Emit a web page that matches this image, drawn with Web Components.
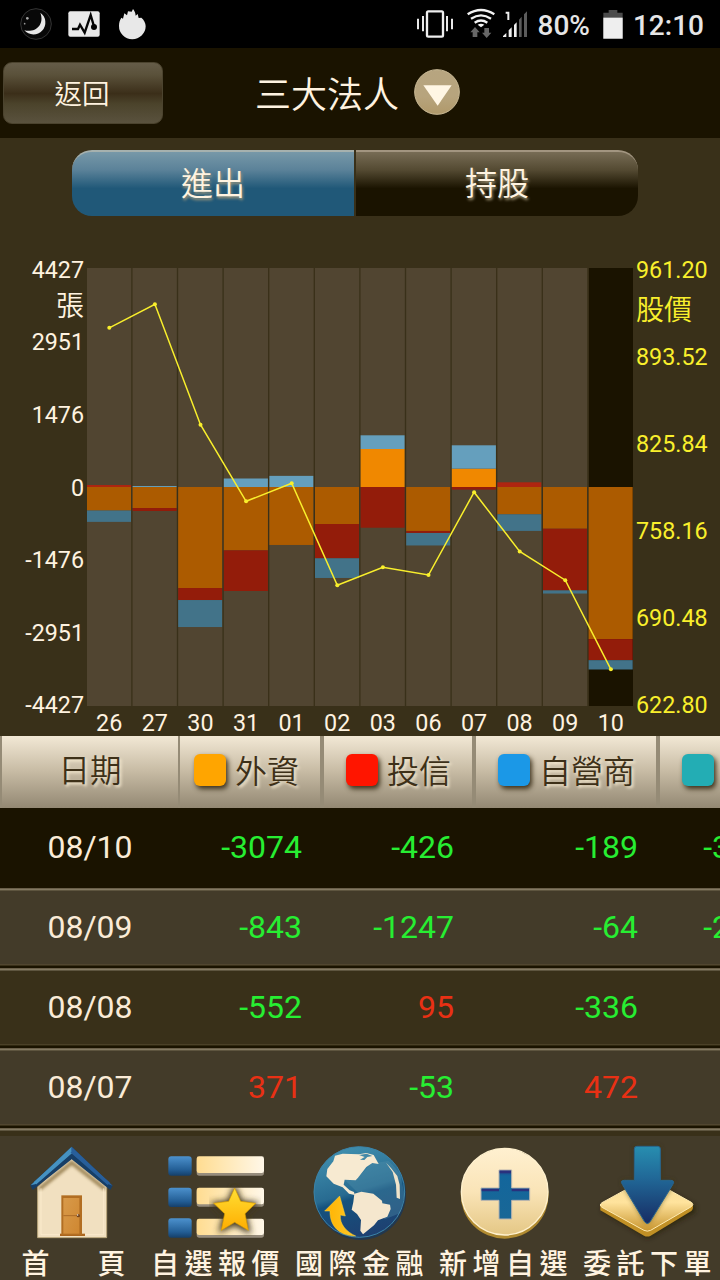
<!DOCTYPE html>
<html lang="zh-Hant">
<head>
<meta charset="utf-8">
<title>三大法人</title>
<style>
    body{
        margin:0;
        width:720px;
        height:1280px;
        overflow:hidden;
        background:#393019;
        color:#fff3e0;
        font-family:Roboto,"Noto Sans CJK TC",sans-serif;
    }
</style>
</head>
<body>
<stock-app></stock-app>
<script>
const makeTemplate = (html) => {
    const template = document.createElement('template')
    template.innerHTML = html
    return template
}

const statusTemplate = makeTemplate(`
<style>
    :host{
        display:flex;
        align-items:center;
        height:48px;
        background:#000;
        color:#e6e6e6;
        font-size:28px;
        font-weight:500;
        line-height:51px;
    }
    svg{ display:block; flex:none; }
    .right{
        margin-left:auto;
        display:flex;
        align-items:center;
        padding-right:16px;
    }
    .battery{ margin:0 10px 0 13px; }
    span{ height:48px; }
</style>
<svg width="150" height="48" viewBox="0 0 450 144">
    <circle cx="108" cy="72" r="46" fill="#080808" stroke="#343434" stroke-width="3"/>
    <path d="M121 38a36 36 0 1 1-48 53c31 8 62-15 48-53Z" fill="#e8e8e8"/>
    <circle cx="82" cy="55" r="4" fill="#aaa"/><circle cx="74" cy="71" r="2.5" fill="#999"/>
    <rect x="205" y="34" width="94" height="76" rx="6" fill="#e9e9e9"/>
    <path d="M216 87h18l6-13 14 24 18-53 10 34" fill="none" stroke="#050505" stroke-width="7"/>
    <circle cx="282" cy="81" r="9" fill="#050505"/>
    <path d="M357 78c0-12 3-18 7-25l5 3 4-16 8 6 3-12 11 1 4-8c4 6 7 9 8 20l6-5 3 12 8-1c8 7 13 16 13 26a40 39 0 0 1-80-1Z" fill="#e8e8e8"/>
</svg>
<div class="right">
    <svg width="122" height="48" viewBox="150 0 366 144">
        <rect x="198" y="34" width="48" height="76" rx="4" fill="none" stroke="#eee" stroke-width="7"/>
        <path d="M171 56v32M186 48v46M258 48v46M273 56v32" stroke="#e8e8e8" stroke-width="6"/>
        <g fill="none" stroke="#f2f2f2" stroke-width="7">
            <path d="M320 43q40-26 80 0"/><path d="M330 56q30-20 60 0"/><path d="M341 68q19-13 38 0"/>
        </g>
        <path d="M350 74q10-6 20 0l-10 8Z" fill="#f2f2f2"/>
        <path d="M342 81l14 16h-7v14h-14v-14h-7ZM377 114l14-16h-7V84h-14v14h-7Z" fill="#676767"/>
        <path d="M434 38h8v22" fill="none" stroke="#eee" stroke-width="6"/>
        <path d="M426 111v-3l10-9v12ZM443 111V91l9-9v29ZM459 111V75l8-8v44Z" fill="#f0f0f0"/>
        <path d="M474 111V59l8-9v61ZM489 111V43l9-9v77Z" fill="#5c5c5c"/>
    </svg>
    <span style="margin-left:5px">80%</span>
    <svg class="battery" width="20" height="48" viewBox="729 0 60 144">
        <path d="M730 116V38h16v-8h26v8h16v78Z" fill="#4b4b4b"/>
        <path d="M730 53h58v63h-58Z" fill="#eee"/>
    </svg>
    <span>12:10</span>
</div>
`)

const headerTemplate = makeTemplate(`
<style>
    :host{
        display:grid;
        grid-template-columns:163px 1fr;
        align-items:center;
        height:90px;
        background:#1a1300;
    }
    .back{
        box-sizing:border-box;
        width:160px;
        height:62px;
        margin-left:3px;
        border:1px solid #4b432e;
        border-radius:9px;
        background:linear-gradient(#655c48,#5a513a 20%,#3b2e19 51%,#4b432b 68%,#5a523e);
        font:350 27.5px/62px Roboto,"Noto Sans CJK TC",sans-serif;
        color:inherit;
        padding:1px 2px 0 0;
        text-align:center;
    }
    .title{
        display:flex;
        align-items:center;
        margin-left:92px;
        gap:15px;
        font-size:36px;
        font-weight:350;
        line-height:90px;
    }
    .title span{ padding-top:4px; height:90px; box-sizing:border-box; line-height:88px; }
    .title svg{ margin-top:-2px; }
</style>
<button class="back"><slot name="back"></slot></button>
<div class="title"><span><slot></slot></span>
    <svg width="46" height="46" viewBox="0 0 138 138">
        <defs><linearGradient id="g" x2="0" y2="1"><stop stop-color="#b7a580"/><stop offset=".6" stop-color="#b7a47d"/><stop offset="1" stop-color="#b0996a"/></linearGradient></defs>
        <circle cx="69" cy="69" r="67" fill="url(#g)" stroke="#c9b995" stroke-width="3"/>
        <path d="M28 49H113L71 110Z" fill="#fff6e4"/>
    </svg>
</div>
`)

const tabTemplate = makeTemplate(`
<style>
    :host{
        display:block;
        height:66px;
        box-sizing:border-box;
        border-top:2px solid #a29580;
        background:linear-gradient(#776c55,#544a32 28%,#1a1300 57%);
        border-radius:0 20px 20px 0;
        text-align:center;
        font-size:32px;
        font-weight:350;
        line-height:64px;
        text-shadow:1px 2px 3px #a89c7c;
    }
    :host([active]){
        border-color:#a6b1ae;
        background:linear-gradient(#7798a8,#5b8299 28%,#205878 57%);
        border-radius:20px 0 0 20px;
    }
</style>
<slot></slot>
`)

const rowTemplate = makeTemplate(`
<style>
    :host{
        display:grid;
        grid-template-columns:180px 140px 152px 184px 146px;
        box-sizing:border-box;
        width:802px;
        height:80px;
        line-height:78px;
        font-size:32px;
        text-align:right;
        background:linear-gradient(#6a5f49 1px,#837962 1px 2px,#5e553f 2px 3px,#433b29 3px 76px,#514630 76px 77px,#393019 77px 78px,#1a1300 78px);
    }
    :host([shade]){
        background:linear-gradient(#6a5f49 1px,#837962 1px 2px,#5e553f 2px 3px,#393019 3px 76px,#4b4128 76px 77px,#302810 77px 78px,#1a1300 78px);
    }
    :host([active]){ background:#1a1300; }
    .date{ text-align:center; color:#faebd7; }
    .num{ padding-right:18px; color:#27ee32; }
    .up{ color:#e93014; }
</style>
<div class="date"></div>
`)

const headTemplate = makeTemplate(`
<style>
    :host{
        display:grid;
        grid-template-columns:176px 138px 148px 180px 142px;
        column-gap:4px;
        width:802px;
        height:72px;
        box-sizing:border-box;
        padding-left:2px;
        background:#958b76;
        color:#3d3018;
        font-size:32px;
        font-weight:350;
        line-height:70px;
        text-shadow:2px 2px 3px #f6ead0;
    }
    div{
        display:flex;
        align-items:center;
        gap:9px;
        padding-left:22px;
        background:linear-gradient(#f2e8d5,#c8bca5 48%,#938873);
    }
    .date{ justify-content:center; padding:0; font-size:31.5px; }
    .first{ margin-left:-2px; padding-left:14px; }
    i{
        width:32px;
        height:32px;
        margin-top:-4px;
        border-radius:6px;
        box-shadow:2px 3px 5px rgba(50,38,16,.9);
    }
</style>
<div class="date">日期</div>
<div class="first"><i style="background:#ffa500"></i>外資</div>
<div><i style="background:#ff1500"></i>投信</div>
<div><i style="background:#1b98e7"></i>自營商</div>
<div><i style="background:#23adb4"></i></div>
`)

const menuTemplate = makeTemplate(`
<style>
    :host{
        display:flex;
        flex-direction:column;
        align-items:center;
        width:144px;
        height:144px;
        overflow:hidden;
    }
    svg{ display:block; flex:none; }
    .label{
        font-size:28px;
        font-weight:500;
        line-height:42px;
        letter-spacing:5.5px;
        padding-left:4px;
        white-space:nowrap;
    }
    :host([wide]) .label{
        display:flex;
        gap:48px;
        letter-spacing:0;
        padding-left:3px;
    }
</style>
<svg width="144" height="108"></svg>
<div class="label"><slot></slot></div>
`)

// every icon keeps its own viewBox
const icons = {
    home: ['0 48 432 324', `
        <defs>
            <linearGradient id="d" x2="1" y2="1"><stop stop-color="#d89a4a"/><stop offset="1" stop-color="#cf8731"/></linearGradient>
            <filter id="b"><feGaussianBlur stdDeviation="5"/></filter>
        </defs>
        <path d="M113 353V200L215 106 320 200V353Z" fill="#f1e0c0" stroke="#baa67c" stroke-width="3"/>
        <path d="M118 207 215 128 315 207" fill="none" stroke="#92794a" stroke-width="12" opacity=".85" filter="url(#b)"/>
        <path d="M123 205V344H311V205" fill="none" stroke="#fff0d2" stroke-width="3" opacity=".7"/>
        <path d="M215 80 91 196 98 210 215 118 331 210 338 197Z" fill="#173e66"/>
        <path d="M215 80 92 196 105 193 215 99Z" fill="#4692c1"/>
        <path d="M215 80 338 197 325 193 215 99Z" fill="#285f9b"/>
        <path d="M105 190 215 94" fill="none" stroke="#4692c1" stroke-width="10"/>
        <path d="M215 94 326 191" fill="none" stroke="#285f9b" stroke-width="10"/>
        <path d="M180 348v-7h75v7Z" fill="#ac661d"/>
        <path d="M184 226h62V345h-62Z" fill="#b26e22"/>
        <path d="M190 234h48v107h-48Z" fill="url(#d)"/>
        <path d="M190 287h48" stroke="#ac6b28" stroke-width="3"/><circle cx="235" cy="287" r="5" fill="#71421b"/><circle cx="233" cy="285" r="2" fill="#fff"/>`],
    list: ['432 48 432 324', `
        <defs>
            <linearGradient id="l"><stop stop-color="#ffdc91"/><stop offset=".35" stop-color="#ffe6af"/><stop offset="1" stop-color="#fff7e8"/></linearGradient>
            <linearGradient id="q" x2="0" y2="1"><stop stop-color="#4c91cd"/><stop offset=".7" stop-color="#235e95"/><stop offset="1" stop-color="#153f6a"/></linearGradient>
            <linearGradient id="s" x2="0" y2="1"><stop stop-color="#ffdf34"/><stop offset="1" stop-color="#ffad00"/></linearGradient>
            <filter id="b"><feGaussianBlur stdDeviation="9"/></filter>
        </defs>
        <g fill="#978d7d"><rect x="590" y="115" width="202" height="52" rx="8"/><rect x="590" y="208" width="202" height="52" rx="8"/><rect x="590" y="301" width="202" height="52" rx="8"/></g>
        <g fill="url(#l)"><rect x="590" y="109" width="202" height="50" rx="7"/><rect x="590" y="203" width="202" height="50" rx="7"/><rect x="590" y="296" width="202" height="49" rx="7"/></g>
        <g fill="url(#q)"><rect x="505" y="109" width="70" height="58" rx="9"/><rect x="505" y="203" width="70" height="58" rx="9"/><rect x="505" y="295" width="70" height="58" rx="9"/></g>
        <path d="M704 204 722 246 768 251 734 284 746 334 704 311 662 331 675 284 640 251 686 246Z" fill="#40341b" stroke="#40341b" stroke-width="10" filter="url(#b)"/>
        <path d="M704 204 722 244 767 250 735 281 745 331 704 307 664 331 674 281 641 250 686 244Z" fill="url(#s)" stroke="#d89b00" stroke-width="2"/>`],
    globe: ['-6 48 432 324', `
        <defs>
            <linearGradient id="o" x1=".35" x2=".65" y2="1"><stop stop-color="#408fae"/><stop offset=".48" stop-color="#286b91"/><stop offset=".55" stop-color="#15527e"/><stop offset="1" stop-color="#1f3f70"/></linearGradient>
            <linearGradient id="y"><stop stop-color="#ffb200"/><stop offset="1" stop-color="#ffc928"/></linearGradient>
        </defs>
        <circle cx="211" cy="223" r="137" fill="#213850"/>
        <circle cx="208" cy="216" r="136" fill="url(#o)" stroke="#3b83a8" stroke-width="3"/>
        <path d="M164 179 284 298 330 280 344 225 330 160 296 123 245 130 197 179Z" fill="#5692ad" opacity=".35"/>
        <path d="M135 107 158 101 207 103 229 99 251 105 266 132 247 129 229 141 204 173 197 181 164 179 161 194 179 211 192 216 194 225 177 221 158 202 131 191 109 169 112 147 130 124Z" fill="#f7ead1"/>
        <path d="M207 105 224 111 210 119 223 120 232 111 247 108 230 101Z" fill="#4389a7"/>
        <path d="M193 221 214 215 250 221 276 242 277 250 300 254 302 267 292 290 264 301 252 316 219 343 211 332 213 300 201 282 185 269 190 246Z" fill="#f5e7ce"/>
        <path d="M288 128 303 144 322 168 329 194 330 237 320 233 318 194 308 156Z" fill="#f0e4ca"/>
        <path d="M149 228 104 273 120 273C119 310 140 347 197 348 167 334 149 312 151 285L166 288Z" fill="url(#y)" stroke="#ffd43a" stroke-width="1.5"/>`],
    add: ['426 48 432 324', `
        <defs>
            <linearGradient id="c" x2="0" y2="1"><stop stop-color="#fff0d0"/><stop offset=".5" stop-color="#fae4b7"/><stop offset="1" stop-color="#e4c785"/></linearGradient>
            <linearGradient id="p" x2="0" y2="1"><stop stop-color="#263b86"/><stop offset=".12" stop-color="#13669c"/><stop offset="1" stop-color="#196796"/></linearGradient>
        </defs>
        <circle cx="644" cy="224" r="132" fill="#b18b31"/>
        <circle cx="644" cy="215" r="130" fill="url(#c)" stroke="#fff1ce" stroke-width="4"/>
        <path d="M627 150h38v54h54v37h-54v56h-38v-56h-54v-37h54Z" fill="url(#p)" stroke="#b7b3af" stroke-width="3"/>
        <path d="M629 152h34v8h-34ZM575 206h52v8h-52ZM665 206h52v8h-52Z" fill="#29317d"/>`],
    order: ['48 48 432 324', `
        <defs>
            <linearGradient id="a" x2="0" y2="1"><stop stop-color="#278eb0"/><stop offset=".4" stop-color="#216998"/><stop offset="1" stop-color="#172c64"/></linearGradient>
            <linearGradient id="m" x2="0" y2="1"><stop stop-color="#f4db99"/><stop offset=".45" stop-color="#ffe39d"/><stop offset="1" stop-color="#c8952e"/></linearGradient>
            <filter id="b"><feGaussianBlur stdDeviation="8"/></filter>
        </defs>
        <path d="M126 256 263 178 406 256V277L263 356 126 275Z" fill="#241b05" opacity=".65" filter="url(#b)"/>
        <path d="M121 255v16l131 76q10 5 20 0l122-74q6-4 5-18Z" fill="#c19025"/>
        <path d="M126 248 252 179q10-5 20 0L394 247q9 6 0 13L272 331q-10 5-20 0L126 262q-10-7 0-14Z" fill="url(#m)" stroke="#ffebb2" stroke-width="3"/>
        <path d="M231 79h62q8 0 8 8v94h31q14 0 6 13L271 301q-9 13-18 0L188 193q-8-12 6-12h29V87q0-8 8-8Z" fill="#3e3519" opacity=".7" filter="url(#b)"/>
        <path d="M231 79h62q8 0 8 8v94h31q14 0 6 13L271 304q-9 13-18 0L187 193q-8-12 6-12h30V87q0-8 8-8Z" fill="url(#a)" stroke="#28658d" stroke-width="3"/>`]
}

class statusBar extends HTMLElement {
    constructor () {
        super();
        this.attachShadow({mode:'open'})
        this.shadowRoot.appendChild(statusTemplate.content.cloneNode(true))
    }
}
window.customElements.define('status-bar',statusBar)

class titleBar extends HTMLElement {
    constructor () {
        super();
        this.attachShadow({mode:'open'})
        this.shadowRoot.appendChild(headerTemplate.content.cloneNode(true))
    }
}
window.customElements.define('title-bar',titleBar)

class segmentTab extends HTMLElement {
    constructor () {
        super();
        this.attachShadow({mode:'open'})
        this.shadowRoot.appendChild(tabTemplate.content.cloneNode(true))
    }
    connectedCallback(){
        this.addEventListener('click',()=>{
            this.dispatchEvent(new CustomEvent('tab-select',{bubbles:true,composed:true}))
        })
    }
}
window.customElements.define('segment-tab',segmentTab)

// day, 外資, 投信, 自營商, price
const days = [
    ['26',-475,40,-230,915],
    ['27',-425,-60,20,933.15],
    ['30',-2042,-243,-546,840.1],
    ['31',-1280,-822,172,780.95],
    ['01',-1172,0,225,794.86],
    ['02',-748,-693,-398,716.05],
    ['03',768,-823,277,729.96],
    ['06',-889,-40,-253,724],
    ['07',371,-53,472,788],
    ['08',-552,95,-336,742.2],
    ['09',-843,-1247,-64,720],
    ['10',-3074,-426,-189,651.15]
]

class flowChart extends HTMLElement {
    constructor () {
        super();
        this.attachShadow({mode:'open'})
    }
    connectedCallback(){
        const top = 52
        const zero = 271
        const bottom = 490
        const unit = 219 / 4427
        const up = ['#f08800','#ae2510','#659fbd']
        const down = ['#ac5b00','#931c0a','#427389']
        let out = `<rect x="87" y="${top}" width="546" height="${bottom - top}" fill="#514531"/>`
        out += `<rect x="588.5" y="${top}" width="44.5" height="${bottom - top}" fill="#1a1300"/>`
        const points = []
        days.forEach((day,i)=>{
            const x = 87 + i * 45.6
            if(i > 0){
                out += `<path d="M${x - .7} ${top}V${bottom}" stroke="#393019" stroke-width="1.3"/>`
            }
            let above = zero
            let below = zero
            for(let k = 0; k < 3; k++){
                const h = Math.abs(day[k + 1]) * unit
                if(day[k + 1] > 0){
                    above -= h
                    out += `<rect x="${x}" y="${above}" width="44.1" height="${h}" fill="${up[k]}"/>`
                }else if(day[k + 1] < 0){
                    out += `<rect x="${x}" y="${below}" width="44.1" height="${h}" fill="${down[k]}"/>`
                    below += h
                }
            }
            points.push([x + 22.3, bottom - (day[4] - 622.8) / 338.4 * 438])
            out += `<text class="mid" x="${x + 22.2}" y="514.8">${day[0]}</text>`
        })
        out += `<polyline points="${points.join(' ')}" fill="none" stroke="#f9ef2c" stroke-width="1.5"/>`
        points.forEach(p=>{ out += `<circle cx="${p[0]}" cy="${p[1]}" r="2" fill="#f9ef2c"/>` })
        const left = ['4427','2951','1476','0','-1476','-2951','-4427']
        left.forEach((t,i)=>{ out += `<text class="end" x="84" y="${61.7 + i * 72.6}">${t}</text>` })
        const right = ['961.20','893.52','825.84','758.16','690.48','622.80']
        right.forEach((t,i)=>{ out += `<text class="price" x="636" y="${61.7 + i * 87.1}">${t}</text>` })
        out += '<text class="end cjk" x="84" y="100">張</text><text class="price cjk" x="636" y="103.5">股價</text>'
        this.shadowRoot.innerHTML = `
            <style>
                :host{ display:block; height:520px; }
                svg{ display:block; }
                text{ font-size:23.3px; fill:#fff3e0; }
                .mid{ text-anchor:middle; }
                .end{ text-anchor:end; }
                .price{ fill:#f9ef2c; }
                .cjk{ font-size:28px; font-weight:350; }
            </style>
            <svg width="720" height="520">${out}</svg>`
    }
}
window.customElements.define('flow-chart',flowChart)

class tableHead extends HTMLElement {
    constructor () {
        super();
        this.attachShadow({mode:'open'})
        this.shadowRoot.appendChild(headTemplate.content.cloneNode(true))
    }
}
window.customElements.define('table-head',tableHead)

class tradeRow extends HTMLElement {
    constructor () {
        super();
        this.attachShadow({mode:'open'})
        this.shadowRoot.appendChild(rowTemplate.content.cloneNode(true))
    }
    connectedCallback(){
        this.shadowRoot.querySelector('.date').textContent = this.getAttribute('date')
        this.getAttribute('values').split(',').forEach(value=>{
            const cell = document.createElement('div')
            cell.className = Number(value) > 0 ? 'num up' : 'num'
            cell.textContent = value
            this.shadowRoot.appendChild(cell)
        })
    }
}
window.customElements.define('trade-row',tradeRow)

class menuItem extends HTMLElement {
    constructor () {
        super();
        this.attachShadow({mode:'open'})
        this.shadowRoot.appendChild(menuTemplate.content.cloneNode(true))
    }
    connectedCallback(){
        const icon = icons[this.getAttribute('icon')]
        const svg = this.shadowRoot.querySelector('svg')
        svg.setAttribute('viewBox',icon[0])
        svg.innerHTML = icon[1]
    }
}
window.customElements.define('menu-item',menuItem)

class stockApp extends HTMLElement {
    constructor () {
        super();
        this.attachShadow({mode:'open'})
        this.shadowRoot.innerHTML = `
            <style>
                :host{
                    display:flex;
                    flex-direction:column;
                    width:720px;
                    height:1280px;
                    overflow:hidden;
                }
                .tabs{
                    display:grid;
                    grid-template-columns:1fr 1fr;
                    gap:2px;
                    padding:12px 82px 0 72px;
                }
                .table{ height:400px; overflow:hidden; flex:none; }
                .table::after{
                    content:'';
                    display:block;
                    height:8px;
                    background:linear-gradient(#6a5f49 1px,#837962 1px 2px,#5e553f 2px 3px,#393019 3px);
                }
                nav{
                    display:grid;
                    grid-template-columns:repeat(5,144px);
                    height:144px;
                    background:#433b29;
                }
            </style>
            <status-bar></status-bar>
            <title-bar><span slot="back">返回</span>三大法人</title-bar>
            <div class="tabs">
                <segment-tab active>進出</segment-tab>
                <segment-tab>持股</segment-tab>
            </div>
            <flow-chart></flow-chart>
            <div class="table">
                <table-head></table-head>
                <trade-row active date="08/10" values="-3074,-426,-189,-3689"></trade-row>
                <trade-row date="08/09" values="-843,-1247,-64,-2154"></trade-row>
                <trade-row shade date="08/08" values="-552,95,-336"></trade-row>
                <trade-row date="08/07" values="371,-53,472"></trade-row>
            </div>
            <nav>
                <menu-item wide icon="home"><span>首</span><span>頁</span></menu-item>
                <menu-item icon="list">自選報價</menu-item>
                <menu-item icon="globe">國際金融</menu-item>
                <menu-item icon="add">新增自選</menu-item>
                <menu-item icon="order">委託下單</menu-item>
            </nav>`
        this.shadowRoot.addEventListener('tab-select',(e)=>{
            this.shadowRoot.querySelectorAll('segment-tab').forEach(tab=>{
                tab.toggleAttribute('active',tab === e.target)
            })
        })
    }
}
window.customElements.define('stock-app',stockApp)
</script>
</body>
</html>
